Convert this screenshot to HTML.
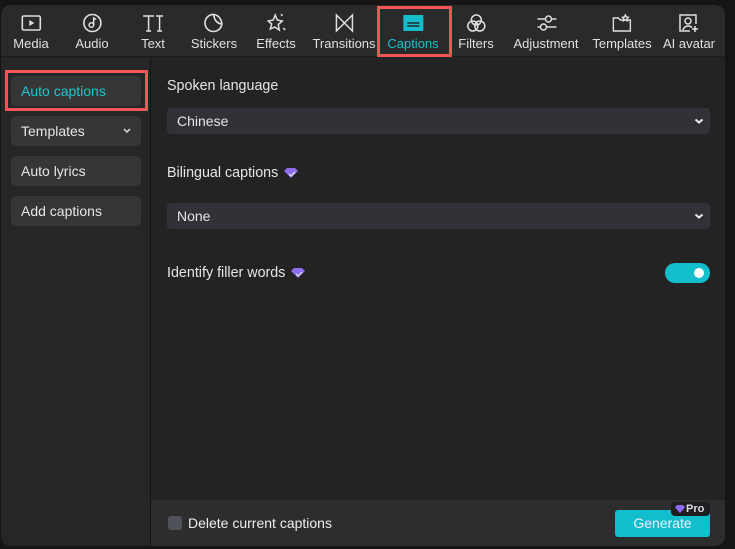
<!DOCTYPE html><html><head><style>
*{margin:0;padding:0;box-sizing:border-box}
body{width:735px;height:549px;background:#151515;font-family:"Liberation Sans",sans-serif;position:relative;overflow:hidden;color:#e6e6e6}
.a{position:absolute}
.panel{left:1px;top:5px;width:724px;height:541px;background:#232323;border-radius:10px;overflow:hidden}
.top{left:0;top:0;width:724px;height:52px;background:#2a2a2a;border-bottom:1px solid #1a1a1a}
.tab{position:absolute;top:0;height:52px;text-align:center;font-size:13px;color:#e0e0e0;transform:translateX(-50%);white-space:nowrap}
.tab svg{display:block;margin:8px auto 0}
.tab span{display:block;margin-top:3px}
.side{left:0;top:53px;width:150px;height:488px;background:#262626;border-right:1px solid #121212}
.btn{position:absolute;left:10px;width:130px;height:30px;background:#363636;border-radius:5px;font-size:14px;padding:7px 0 0 10px;color:#e6e6e6}
.lbl{font-size:14.3px;color:#e6e6e6}
.dd{position:absolute;left:166px;width:543px;height:26px;background:#313137;border-radius:4px;font-size:14px;padding:5px 0 0 10px}
.chev{position:absolute;right:6px;top:9px}
.gem{display:inline-block;vertical-align:middle;margin-left:6px}
</style></head><body>
<div class="a panel">
<div class="a top">
<div class="tab" style="left:30px"><svg width="22" height="20" viewBox="0 0 22 20"><rect x="2" y="3" width="18" height="14" rx="1.5" fill="none" stroke="#e0e0e0" stroke-width="1.6"/><path d="M9 7v6l5-3z" fill="#e0e0e0"/></svg><span>Media</span></div>
<div class="tab" style="left:91px"><svg width="22" height="20" viewBox="0 0 22 20"><circle cx="11" cy="10" r="8.5" fill="none" stroke="#e0e0e0" stroke-width="1.6"/><circle cx="10" cy="12" r="2.3" fill="none" stroke="#e0e0e0" stroke-width="1.5"/><path d="M12.3 12V5l2.5 1.5" fill="none" stroke="#e0e0e0" stroke-width="1.5"/></svg><span>Audio</span></div>
<div class="tab" style="left:152px"><svg width="22" height="20" viewBox="0 0 22 20"><path d="M1 3h11M6.5 3v15M4 18h5M14 3h7M17.5 3v15M15 18h5" stroke="#e0e0e0" stroke-width="1.5" fill="none"/></svg><span>Text</span></div>
<div class="tab" style="left:213px"><svg width="22" height="20" viewBox="0 0 22 20"><path d="M19 11A8.5 8.5 0 1 1 11 1.5c0 5 3 9 8 9.5z M11 1.5c4 .5 7.5 4 8 9.5" fill="none" stroke="#e0e0e0" stroke-width="1.6"/></svg><span>Stickers</span></div>
<div class="tab" style="left:275px"><svg width="22" height="20" viewBox="0 0 22 20"><path d="M10 2l2 5 5 1-4 3.5 1 5.5-4.5-3L5 16l1.5-5L3 8l5-1z M16 1l1 2 M18 15l2 2" fill="none" stroke="#e0e0e0" stroke-width="1.5"/></svg><span>Effects</span></div>
<div class="tab" style="left:343px"><svg width="22" height="20" viewBox="0 0 22 20"><path d="M3 2v16l16-16v16z" fill="none" stroke="#e0e0e0" stroke-width="1.5"/></svg><span>Transitions</span></div>
<div class="tab" style="left:412px;color:#1ec0cc"><svg width="22" height="20" viewBox="0 0 22 20"><rect x="1" y="2" width="20" height="16" fill="#17bccb"/><path d="M5 10h12M5 13h12" stroke="#1a2a2e" stroke-width="1.5"/></svg><span>Captions</span></div>
<div class="tab" style="left:475px"><svg width="22" height="20" viewBox="0 0 22 20"><circle cx="11" cy="7" r="5" fill="none" stroke="#e0e0e0" stroke-width="1.5"/><circle cx="7.5" cy="13" r="5" fill="none" stroke="#e0e0e0" stroke-width="1.5"/><circle cx="14.5" cy="13" r="5" fill="none" stroke="#e0e0e0" stroke-width="1.5"/></svg><span>Filters</span></div>
<div class="tab" style="left:545px"><svg width="22" height="20" viewBox="0 0 22 20"><path d="M2 6h19M2 14h19" stroke="#e0e0e0" stroke-width="1.4"/><circle cx="13" cy="6" r="3" fill="#2a2a2a" stroke="#e0e0e0" stroke-width="1.4"/><circle cx="8" cy="14" r="3" fill="#2a2a2a" stroke="#e0e0e0" stroke-width="1.4"/></svg><span>Adjustment</span></div>
<div class="tab" style="left:621px"><svg width="22" height="20" viewBox="0 0 22 20"><path d="M2 7v11h17V7H9L7 5H2z M14 2l1 2 2 .3-1.5 1.5.4 2-1.9-1-1.9 1 .4-2L11 4.3l2-.3z" fill="none" stroke="#e0e0e0" stroke-width="1.4"/></svg><span>Templates</span></div>
<div class="tab" style="left:688px"><svg width="22" height="20" viewBox="0 0 22 20"><path d="M12 18H2V2h16v9" fill="none" stroke="#e0e0e0" stroke-width="1.5"/><circle cx="10" cy="8" r="3" fill="none" stroke="#e0e0e0" stroke-width="1.5"/><path d="M5 17c1-3 3-4 5-4s3 .5 4 1.5M17 13v6M14 16h6" fill="none" stroke="#e0e0e0" stroke-width="1.5"/></svg><span>AI avatar</span></div>
</div>
<div class="a" style="left:376px;top:1px;width:75px;height:51px;border:3px solid #f25555"></div>
<div class="a side"></div>
<div class="btn" style="top:71px;color:#22c3cf">Auto captions</div>
<div class="a" style="left:4px;top:65px;width:143px;height:41px;border:3px solid #f25555"></div>
<div class="btn" style="top:111px">Templates<svg class="a" style="right:10px;top:12px" width="8" height="6" viewBox="0 0 8 6"><path d="M1 1l3 3 3-3" stroke="#ddd" stroke-width="1.5" fill="none"/></svg></div>
<div class="btn" style="top:151px">Auto lyrics</div>
<div class="btn" style="top:191px">Add captions</div>
<div class="a lbl" style="left:166px;top:73px">Spoken language</div>
<div class="dd" style="top:103px">Chinese<svg class="chev" width="10" height="8" viewBox="0 0 10 8"><path d="M1.5 2.5l3.5 3 3.5-3" stroke="#eee" stroke-width="2" fill="none"/></svg></div>
<div class="a lbl" style="left:166px;top:160px">Bilingual captions<svg class="gem" width="14" height="12" viewBox="0 0 14 12"><path d="M3 1h8l3 3-7 7-7-7z" fill="#8b6cf0"/><path d="M5 7l2 2 4-4" stroke="#ddd" stroke-width="1.3" fill="none"/></svg></div>
<div class="dd" style="top:198px">None<svg class="chev" width="10" height="8" viewBox="0 0 10 8"><path d="M1.5 2.5l3.5 3 3.5-3" stroke="#eee" stroke-width="2" fill="none"/></svg></div>
<div class="a lbl" style="left:166px;top:260px">Identify filler words<svg class="gem" width="14" height="12" viewBox="0 0 14 12"><path d="M3 1h8l3 3-7 7-7-7z" fill="#8b6cf0"/><path d="M5 7l2 2 4-4" stroke="#ddd" stroke-width="1.3" fill="none"/></svg></div>
<div class="a" style="left:664px;top:258px;width:45px;height:20px;border-radius:10px;background:#13bfcc"><div class="a" style="right:6px;top:5px;width:10px;height:10px;border-radius:50%;background:#fff"></div></div>
<div class="a" style="left:150px;top:495px;width:574px;height:46px;background:#2d2d2d"></div>
<div class="a" style="left:167px;top:511px;width:14px;height:14px;border-radius:3px;background:#50525a"></div>
<div class="a" style="left:187px;top:510px;font-size:14px;color:#eee">Delete current captions</div>
<div class="a" style="left:614px;top:505px;width:95px;height:27px;border-radius:3px;background:#12bdcc;color:#eef;font-size:14px;text-align:center;padding-top:5px">Generate</div>
<div class="a" style="left:670px;top:497px;width:39px;height:14px;border-radius:4px;background:#1d1d22;font-size:11px;font-weight:bold;color:#ddd;padding-left:15px;line-height:14px"><svg class="a" style="left:4px;top:3px" width="10" height="8" viewBox="0 0 10 8"><path d="M2 0h6l2 2.5L5 8 0 2.5z" fill="#8b6cf0"/></svg>Pro</div>
</div>
</body></html>
